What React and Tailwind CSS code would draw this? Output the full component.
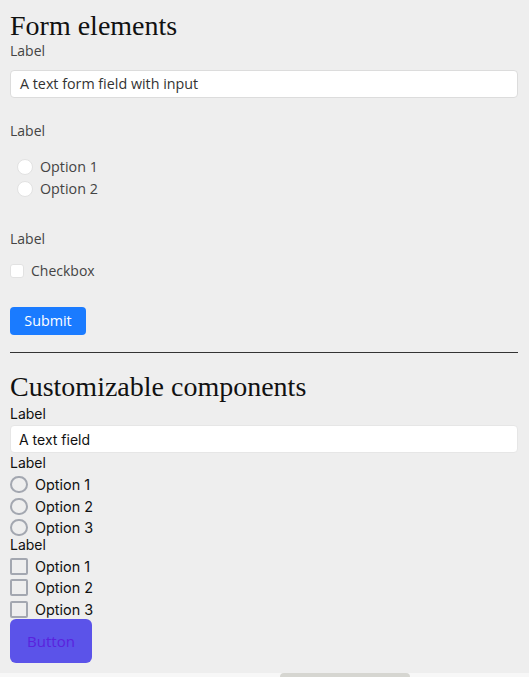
import React from 'react';

const serif = "font-['Liberation_Serif','DejaVu_Serif',serif]";
const openSans = "font-['Open_Sans','Noto_Sans',sans-serif]";
const inter = "font-['Inter','Roboto',sans-serif]";

const FormElements = () => (
  <section className={openSans}>
    <h1 className={`${serif} pt-[11px] text-[28px] leading-[30px] text-[#111]`}>Form elements</h1>
    <div className="text-[14px] leading-[20px] text-[#444]">Label</div>
    <div className="mt-[9px] flex h-[28px] items-center rounded-[4px] border border-[#dcdcdc] bg-white pl-[9px] text-[14.3px] leading-[20px] text-[#333]">
      A text form field with input
    </div>

    <div className="mt-[23px] text-[14px] leading-[20px] text-[#444]">Label</div>
    <div className="mt-[15px]">
      {['Option 1', 'Option 2'].map((o) => (
        <div key={o} className="flex h-[22px] items-center text-[14.3px] leading-[20px] text-[#444]">
          <span className="ml-[7px] h-[16px] w-[16px] rounded-full border border-[#e2e2e2] bg-white" />
          <span className="ml-[7px]">{o}</span>
        </div>
      ))}
    </div>

    <div className="mt-[29px] text-[14px] leading-[20px] text-[#444]">Label</div>
    <div className="mt-[12px] flex h-[20px] items-center text-[14px] leading-[20px] text-[#444]">
      <span className="h-[14px] w-[14px] rounded-[3px] border border-[#e2e2e2] bg-white" />
      <span className="ml-[7px]">Checkbox</span>
    </div>

    <button className="mt-[26px] flex h-[28px] w-[76px] items-center justify-center rounded-[4px] bg-[#1a7bff] text-[14.3px] leading-[20px] text-white">
      Submit
    </button>

    <hr className="mt-[17px] border-0 border-t border-[#333]" />
  </section>
);

const Custom = () => (
  <section className={inter}>
    <h2 className={`${serif} mt-[19px] text-[28px] leading-[30px] text-[#111]`}>Customizable components</h2>
    <div className="mt-[3px] text-[14px] leading-[17px] text-[#111]">Label</div>
    <div className="mt-[3px] flex h-[28px] items-center rounded-[4px] border border-[#e6e6e6] bg-white pl-[8px] text-[14px] leading-[17px] text-[#111]">
      A text field
    </div>

    <div className="mt-[1px] text-[14px] leading-[17px] text-[#111]">Label</div>
    {['Option 1', 'Option 2', 'Option 3'].map((o) => (
      <div key={o} className="mt-[5.5px] flex h-[16px] items-center text-[14.4px] leading-[17px] text-[#111]">
        <span className="h-[17px] w-[18px] rounded-full border-2 border-[#a3a7b0]" />
        <span className="ml-[7px]">{o}</span>
      </div>
    ))}

    <div className="text-[14px] leading-[17px] text-[#111]">Label</div>
    {['Option 1', 'Option 2', 'Option 3'].map((o) => (
      <div key={o} className="mt-[5.5px] flex h-[16px] items-center text-[14.4px] leading-[17px] text-[#111]">
        <span className="h-[17px] w-[18px] rounded-[2px] border-2 border-[#a3a7b0]" />
        <span className="ml-[7px]">{o}</span>
      </div>
    ))}

    <button className={`${openSans} mt-[2px] flex h-[44px] w-[82px] items-center justify-center rounded-[6px] bg-[#5b53e9] text-[15px] text-[#5a22dd]`}>
      Button
    </button>
  </section>
);

export default function App() {
  return (
    <div className="min-h-screen bg-[#eeeeee] pl-[10px] pr-[11px]">
      <FormElements />
      <Custom />
      {/* scrollbar strip at the bottom edge */}
      <div className="fixed bottom-0 left-0 right-0 h-[4px] bg-[#f7f7f7]">
        <div className="ml-[280px] h-[4px] w-[130px] rounded-t-full bg-[#d6d6d1]" />
      </div>
    </div>
  );
}
